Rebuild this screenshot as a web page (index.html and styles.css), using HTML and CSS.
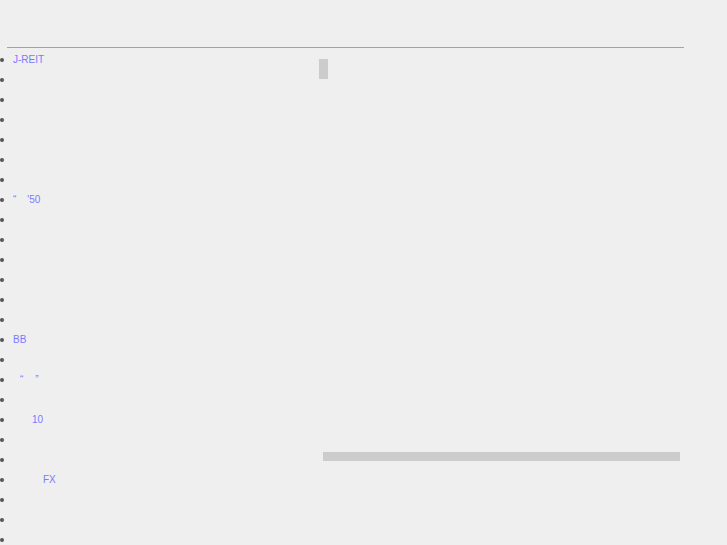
FILE: index.html
```html
<!DOCTYPE html>
<html>
  <head>
    <meta charset="utf-8">
    <meta name="viewport" content="width=device-width, initial-scale=1">
    <title>Links</title>
    <link rel="stylesheet" href="styles.css">
  </head>
  <body>
    <div class="header"></div>
    <div class="main">
      <ul class="links">
        <li><a href="#">J-REIT</a></li>
        <li></li>
        <li></li>
        <li></li>
        <li></li>
        <li></li>
        <li></li>
        <li><a href="#">&ldquo;<span class="gap g11"></span>'50</a></li>
        <li></li>
        <li></li>
        <li></li>
        <li></li>
        <li></li>
        <li></li>
        <li><a href="#">BB</a></li>
        <li></li>
        <li><a href="#"><span class="gap g7"></span>&ldquo;<span class="gap g12"></span>&rdquo;</a></li>
        <li></li>
        <li><a href="#"><span class="gap g19"></span>10</a></li>
        <li></li>
        <li></li>
        <li><a href="#"><span class="gap g30"></span>FX</a></li>
        <li></li>
        <li></li>
        <li></li>
        <li></li>
      </ul>
      <div class="side">
        <div class="block"></div>
        <div class="bar"></div>
      </div>
    </div>
  </body>
</html>
```

FILE: styles.css
```css
body {
  margin: 0;
  background: #efefef;
  font-family: "Liberation Sans", Arial, sans-serif;
  font-size: 10px;
}

.header {
  height: 47px;
  width: 677px;
  margin-left: 7px;
  border-bottom: 1px solid #a3a3a3;
}

.main {
  display: flex;
}

.links {
  list-style: none;
  margin: 2px 0 0 0;
  padding: 0;
  width: 319px;
}

.links li {
  height: 20px;
  display: flex;
  align-items: center;
}

.links li::before {
  content: "";
  width: 4px;
  height: 4px;
  border-radius: 50%;
  background: #555;
  margin-right: 9px;
}

.links a {
  color: #7a7aff;
  text-decoration: none;
  margin-bottom: 2px;
}

.gap {
  display: inline-block;
}

.g7 { width: 7px; }
.g11 { width: 11px; }
.g12 { width: 12px; }
.g19 { width: 19px; }
.g30 { width: 30px; }

.side {
  flex: 1;
}

.block {
  width: 9px;
  height: 20px;
  margin-top: 11px;
  background: #cccccc;
}

.bar {
  width: 357px;
  height: 9px;
  margin: 373px 0 0 4px;
  background: #cccccc;
}
```
